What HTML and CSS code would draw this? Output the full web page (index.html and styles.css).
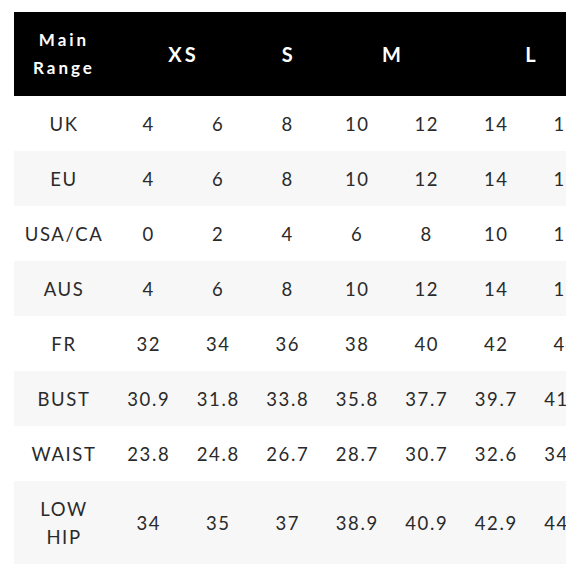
FILE: index.html
```html
<!DOCTYPE html>
<html>
<head>
<meta charset="utf-8">
<link rel="stylesheet" href="styles.css">
</head>
<body>
<div class="wrap">
<table class="chart">
<colgroup>
<col class="c-label">
<col class="c-size"><col class="c-size"><col class="c-size"><col class="c-size"><col class="c-size"><col class="c-size"><col class="c-size">
</colgroup>
<thead>
<tr>
<th class="range">Main<br>Range</th>
<th colspan="2" class="sz xs">XS</th>
<th class="sz">S</th>
<th colspan="2" class="sz">M</th>
<th colspan="2" class="sz">L</th>
</tr>
</thead>
<tbody>
<tr><td>UK</td><td>4</td><td>6</td><td>8</td><td>10</td><td>12</td><td>14</td><td>16</td></tr>
<tr><td>EU</td><td>4</td><td>6</td><td>8</td><td>10</td><td>12</td><td>14</td><td>16</td></tr>
<tr><td>USA/CA</td><td>0</td><td>2</td><td>4</td><td>6</td><td>8</td><td>10</td><td>12</td></tr>
<tr><td>AUS</td><td>4</td><td>6</td><td>8</td><td>10</td><td>12</td><td>14</td><td>16</td></tr>
<tr><td>FR</td><td>32</td><td>34</td><td>36</td><td>38</td><td>40</td><td>42</td><td>44</td></tr>
<tr><td>BUST</td><td>30.9</td><td>31.8</td><td>33.8</td><td>35.8</td><td>37.7</td><td>39.7</td><td>41.7</td></tr>
<tr><td>WAIST</td><td>23.8</td><td>24.8</td><td>26.7</td><td>28.7</td><td>30.7</td><td>32.6</td><td>34.6</td></tr>
<tr><td>LOW<br>HIP</td><td>34</td><td>35</td><td>37</td><td>38.9</td><td>40.9</td><td>42.9</td><td>44.9</td></tr>
</tbody>
</table>
</div>
</body>
</html>
```

FILE: styles.css
```css
html, body {
  margin: 0;
  padding: 0;
  background: #fff;
}
.wrap {
  margin: 12px 0 0 14px;
  width: 552px;
  overflow: hidden;
}
.chart {
  border-collapse: collapse;
  table-layout: fixed;
  width: 586.5px;
  font-family: "Lato", "Open Sans", sans-serif;
  color: #2a2a2a;
}
.c-label { width: 100px; }
.c-size { width: 69.5px; }
.chart th {
  background: #000;
  color: #fff;
  height: 84px;
  padding: 0;
  text-align: center;
  font-weight: 700;
}
.chart th.range {
  font-size: 17px;
  line-height: 28px;
  letter-spacing: 3px;
}
.chart th.sz {
  font-size: 20px;
  letter-spacing: 1px;
}
.chart th.xs {
  letter-spacing: 3px;
}
.chart td {
  padding: 13.5px 0;
  height: 28px;
  font-size: 18.5px;
  font-weight: 400;
  line-height: 28px;
  letter-spacing: 1.6px;
  text-align: center;
  white-space: nowrap;
}
.chart tbody tr:nth-child(even) td {
  background: #f7f7f7;
}
```
